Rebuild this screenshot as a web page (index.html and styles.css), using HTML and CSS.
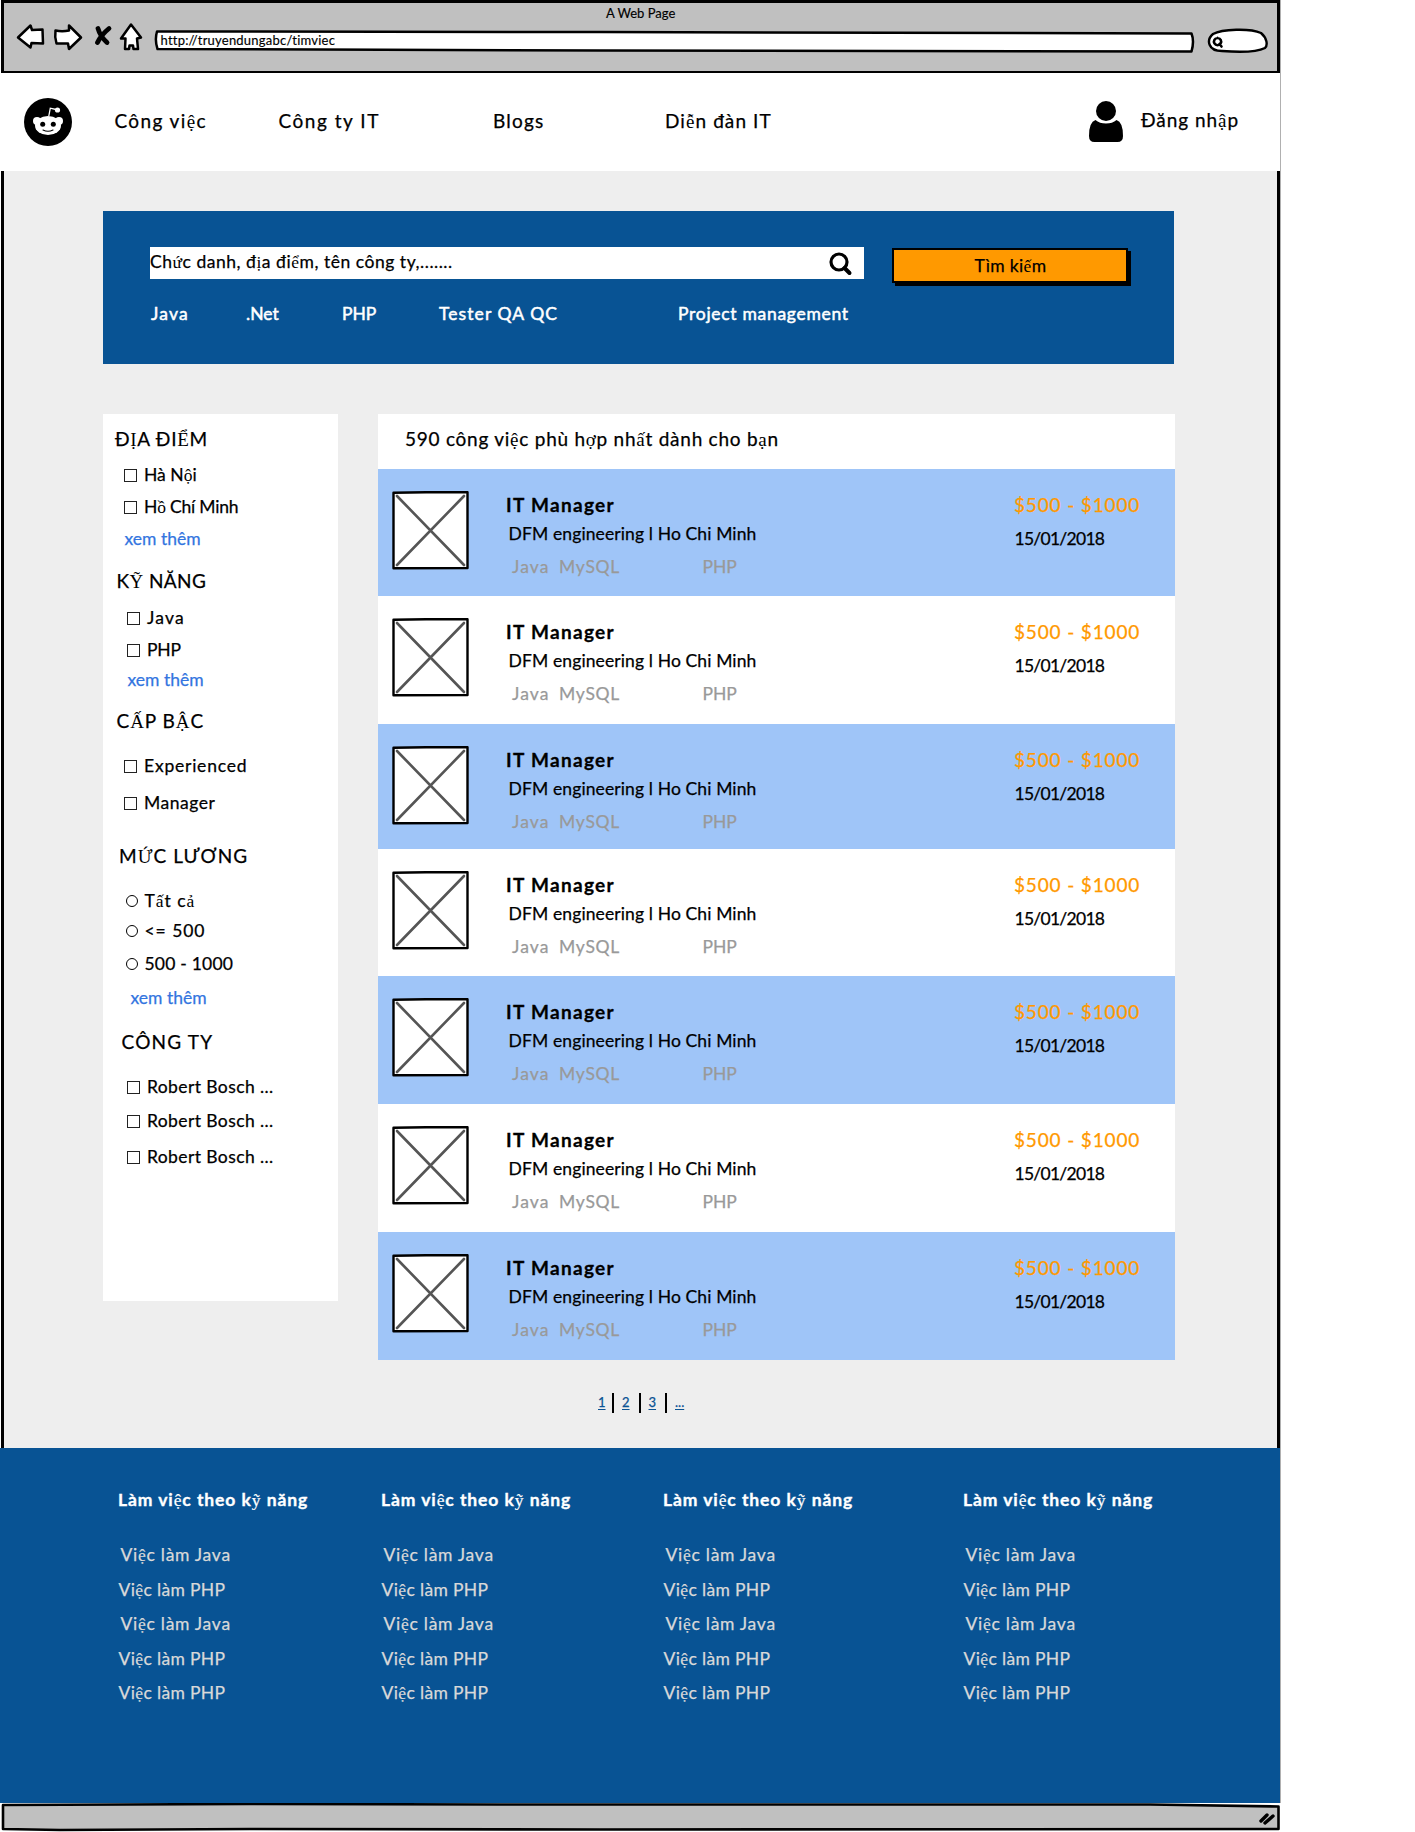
FILE: index.html
```html
<!DOCTYPE html>
<html lang="vi">
<head>
<meta charset="utf-8">
<title>A Web Page</title>
<link rel="stylesheet" href="styles.css">
</head>
<body>
<svg class="defs" width="0" height="0">
  <symbol id="thumb" viewBox="0 0 77 79">
    <path d="M1.500 1.800 L34 1.200 L75.500 1.300 L75.500 77 L1.500 77.300 Z" fill="#fff" stroke="#000" stroke-width="2.400" stroke-linejoin="round"/>
    <path d="M5 5 L72 74 M72 5 L5 74" stroke="#555" stroke-width="2.600" stroke-linecap="round"/>
  </symbol>
</svg>
<div class="window">
  <header class="chrome">
    <div class="chrome-title k0">A Web Page</div>
    <div class="toolbar">
      <svg class="tools" width="130" height="30" viewBox="16 22 130 30">
        <g fill="#fff" stroke="#000" stroke-width="2.5" stroke-linejoin="round">
          <path d="M18 37.5 L30.5 25.5 L32 30 L42.5 29.5 L43 43.5 L31.5 43 L30.5 47.5 Z"/>
          <path d="M55.5 30.5 Q62 32 69 30.5 L69 25.5 L81 37.5 L69 49 L68 43.5 L56.5 43.5 Q54.5 37 55.5 30.5 Z"/>
          <path d="M131 24.500 L141 37.500 L137 38.500 L138 49 L133.500 49 L133 45.500 L129.500 45.500 L129 49 L125 49 L125.500 38.500 L121 38.500 Z"/>
        </g>
        <path d="M98 28.500 Q100 36 107 42.500 M109 28.500 Q101 35 97.500 42.500" fill="none" stroke="#000" stroke-width="4.800" stroke-linecap="round"/>
      </svg>
      <div class="address">
        <svg class="address-frame" width="1042" height="26" viewBox="153 28 1042 26">
          <path d="M157 31.500 L600 32 L1191.500 33.500 Q1194.500 41 1191.500 51.500 L600 50.500 L157.500 49 Q154.500 40 157 31.500 Z" fill="#fff" stroke="#000" stroke-width="2.500" stroke-linejoin="round"/>
        </svg>
        <span class="url k2">http://truyendungabc/timviec</span>
      </div>
      <svg class="finder" width="62" height="28" viewBox="1207 27 62 28">
        <path d="M1213 34 C1222 29 1250 28 1261 33 C1267 38 1268 45 1265 48 C1255 53 1235 52 1222 51 C1208 51 1206 40 1213 34 Z" fill="#fff" stroke="#000" stroke-width="2.400"/>
        <path d="M1217.500 38 a3.600 3.600 0 1 0 .1 0 M1219.500 44 L1221.500 46.500" fill="none" stroke="#000" stroke-width="2.600" stroke-linecap="round"/>
      </svg>
    </div>
  </header>

  <nav class="nav">
    <svg class="logo" width="48" height="48" viewBox="0 0 48 48">
      <circle cx="24" cy="24" r="24"/>
      <g fill="#fff">
        <circle cx="13" cy="23" r="4"/><circle cx="35" cy="23" r="4"/>
        <ellipse cx="24" cy="27.500" rx="13" ry="9.600"/>
        <circle cx="33.500" cy="12" r="2.600"/>
      </g>
      <path d="M24.800 18 L26.300 10.200 L32 11.500" fill="none" stroke="#fff" stroke-width="1.300"/>
      <circle cx="18.700" cy="26.300" r="2.500"/><circle cx="29.300" cy="26.300" r="2.500"/>
      <path d="M19 32 Q24 34.500 29 32" fill="none" stroke="#000" stroke-width="1.100" stroke-linecap="round"/>
    </svg>
    <a class="nav-1 k14">Công vi<i>ệ</i>c</a>
    <a class="nav-2 k15">Công ty IT</a>
    <a class="nav-3 k12">Blogs</a>
    <a class="nav-4 k11">Di<i>ễ</i>n đàn IT</a>
    <svg class="user" width="34" height="41" viewBox="0 0 34 41">
      <circle cx="17" cy="10" r="10"/>
      <path d="M6.500 19 Q10.500 22.500 17 22.500 Q23.500 22.500 27.500 19 Q34 21 34 35 Q34 41 28.500 41 H5.500 Q0 41 0 35 Q0 21 6.500 19 Z"/>
    </svg>
    <a class="login k9">Đăng nh<i>ậ</i>p</a>
  </nav>

  <main class="page">
    <section class="search">
      <div class="search-row">
        <div class="field">
          <span class="k5">Ch<i>ứ</i>c danh, đ<i>ị</i>a đi<i>ể</i>m, tên công ty,.......</span>
          <svg width="24" height="24" viewBox="0 0 24 24"><circle cx="10" cy="10" r="8" fill="none" stroke="#000" stroke-width="3.200"/><path d="M15.500 16 L20.500 21" stroke="#000" stroke-width="4" stroke-linecap="round"/></svg>
        </div>
        <button class="go">Tìm ki<i>ế</i>m</button>
      </div>
      <div class="tags">
        <a class="k12">Java</a><a class="k0">.Net</a><a class="k0">PHP</a><a class="k11">Tester QA QC</a><a class="k7">Project management</a>
      </div>
    </section>

    <div class="columns">
      <aside class="filters">
        <h3 class="r mt15 in11 k7">Đ<i>Ị</i>A ĐI<i>Ể</i>M</h3>
        <label class="r mt15 in21 k0"><b class="box"></b>Hà N<i>ộ</i>i</label>
        <label class="r mt12 in21 kn"><b class="box"></b>H<i>ồ</i> Chí Minh</label>
        <a class="r mt12 in21 k0">xem thêm</a>
        <h3 class="r mt23 in13 k4">K<i>Ỹ</i> NĂNG</h3>
        <label class="r mt16 in24 k12"><b class="box"></b>Java</label>
        <label class="r mt12 in24 kn"><b class="box"></b>PHP</label>
        <a class="r mt10 in24 k0">xem thêm</a>
        <h3 class="r mt22 in13 k9">C<i>Ấ</i>P B<i>Ậ</i>C</h3>
        <label class="r mt24 in21 k8"><b class="box"></b>Experienced</label>
        <label class="r mt17 in21 k5"><b class="box"></b>Manager</label>
        <h3 class="r mt34 in15 k11">M<i>Ứ</i>C LƯƠNG</h3>
        <label class="r mt24 in23 k9"><b class="dot"></b>T<i>ấ</i>t c<i>ả</i></label>
        <label class="r mt10 in23 k9"><b class="dot"></b>&lt;= 500</label>
        <label class="r mt13 in23 k2"><b class="dot"></b>500 - 1000</label>
        <a class="r mt14 in27 k0">xem thêm</a>
        <h3 class="r mt25 in18 k12">CÔNG TY</h3>
        <label class="r mt24 in24 k4"><b class="box"></b>Robert Bosch ...</label>
        <label class="r mt14 in24 k4"><b class="box"></b>Robert Bosch ...</label>
        <label class="r mt16 in24 k4"><b class="box"></b>Robert Bosch ...</label>
      </aside>

      <section class="results">
        <h2 class="k75">590 công vi<i>ệ</i>c phù h<i>ợ</i>p nh<i>ấ</i>t dành cho b<i>ạ</i>n</h2>
        <article class="job h127">
          <svg class="thumb"><use href="#thumb"/></svg>
          <div class="info"><h4>IT Manager</h4><p>DFM engineering l Ho Chi Minh</p><div class="skills"><span>Java</span><span>MySQL</span><span>PHP</span></div></div>
          <div class="meta"><strong>$500 - $1000</strong><time>15/01/2018</time></div>
        </article>
        <article class="job h128">
          <svg class="thumb"><use href="#thumb"/></svg>
          <div class="info"><h4>IT Manager</h4><p>DFM engineering l Ho Chi Minh</p><div class="skills"><span>Java</span><span>MySQL</span><span>PHP</span></div></div>
          <div class="meta"><strong>$500 - $1000</strong><time>15/01/2018</time></div>
        </article>
        <article class="job h125">
          <svg class="thumb"><use href="#thumb"/></svg>
          <div class="info"><h4>IT Manager</h4><p>DFM engineering l Ho Chi Minh</p><div class="skills"><span>Java</span><span>MySQL</span><span>PHP</span></div></div>
          <div class="meta"><strong>$500 - $1000</strong><time>15/01/2018</time></div>
        </article>
        <article class="job h127">
          <svg class="thumb"><use href="#thumb"/></svg>
          <div class="info"><h4>IT Manager</h4><p>DFM engineering l Ho Chi Minh</p><div class="skills"><span>Java</span><span>MySQL</span><span>PHP</span></div></div>
          <div class="meta"><strong>$500 - $1000</strong><time>15/01/2018</time></div>
        </article>
        <article class="job h128">
          <svg class="thumb"><use href="#thumb"/></svg>
          <div class="info"><h4>IT Manager</h4><p>DFM engineering l Ho Chi Minh</p><div class="skills"><span>Java</span><span>MySQL</span><span>PHP</span></div></div>
          <div class="meta"><strong>$500 - $1000</strong><time>15/01/2018</time></div>
        </article>
        <article class="job h128">
          <svg class="thumb"><use href="#thumb"/></svg>
          <div class="info"><h4>IT Manager</h4><p>DFM engineering l Ho Chi Minh</p><div class="skills"><span>Java</span><span>MySQL</span><span>PHP</span></div></div>
          <div class="meta"><strong>$500 - $1000</strong><time>15/01/2018</time></div>
        </article>
        <article class="job h128">
          <svg class="thumb"><use href="#thumb"/></svg>
          <div class="info"><h4>IT Manager</h4><p>DFM engineering l Ho Chi Minh</p><div class="skills"><span>Java</span><span>MySQL</span><span>PHP</span></div></div>
          <div class="meta"><strong>$500 - $1000</strong><time>15/01/2018</time></div>
        </article>
      </section>
    </div>

    <div class="pager"><a><u>1</u></a><a><u>2</u></a><a><u>3</u></a><a><u>...</u></a></div>
  </main>

  <footer class="footer">
    <ul>
      <li class="head">Làm vi<i>ệ</i>c theo k<i>ỹ</i> năng</li>
      <li class="java">Vi<i>ệ</i>c làm Java</li><li>Vi<i>ệ</i>c làm PHP</li><li class="java">Vi<i>ệ</i>c làm Java</li><li>Vi<i>ệ</i>c làm PHP</li><li>Vi<i>ệ</i>c làm PHP</li>
    </ul>
    <ul>
      <li class="head">Làm vi<i>ệ</i>c theo k<i>ỹ</i> năng</li>
      <li class="java">Vi<i>ệ</i>c làm Java</li><li>Vi<i>ệ</i>c làm PHP</li><li class="java">Vi<i>ệ</i>c làm Java</li><li>Vi<i>ệ</i>c làm PHP</li><li>Vi<i>ệ</i>c làm PHP</li>
    </ul>
    <ul>
      <li class="head">Làm vi<i>ệ</i>c theo k<i>ỹ</i> năng</li>
      <li class="java">Vi<i>ệ</i>c làm Java</li><li>Vi<i>ệ</i>c làm PHP</li><li class="java">Vi<i>ệ</i>c làm Java</li><li>Vi<i>ệ</i>c làm PHP</li><li>Vi<i>ệ</i>c làm PHP</li>
    </ul>
    <ul>
      <li class="head">Làm vi<i>ệ</i>c theo k<i>ỹ</i> năng</li>
      <li class="java">Vi<i>ệ</i>c làm Java</li><li>Vi<i>ệ</i>c làm PHP</li><li class="java">Vi<i>ệ</i>c làm Java</li><li>Vi<i>ệ</i>c làm PHP</li><li>Vi<i>ệ</i>c làm PHP</li>
    </ul>
  </footer>

  <div class="statusbar">
    <svg width="1281" height="29" viewBox="0 0 1281 29">
      <rect x="0" y="0" width="1281" height="29" fill="#fff"/>
      <path d="M3 2 L250 1 L500 1.500 L1150 1.500 L1278.500 3.500 L1278.500 26 L600 26.500 L250 26 L60 27 L3 26 Z" fill="#c0c0c0" stroke="#000" stroke-width="2.600" stroke-linejoin="round"/>
      <path d="M1261 18 L1267 12 M1265 20 L1273 13" stroke="#000" stroke-width="3.400" stroke-linecap="round"/>
    </svg>
  </div>
</div>
</body>
</html>
```
FILE: styles.css
```css
* { box-sizing: border-box; }
body {
  margin: 0;
  background: #fff;
  color: #000;
  font: 17.5px/22px Lato, "Liberation Sans", sans-serif;
  -webkit-text-stroke: 0.25px;
}
h2, h3, h4, p, ul { margin: 0; padding: 0; font-weight: 400; }
i { font-family: "Liberation Serif", serif; font-style: normal; font-weight: 400; -webkit-text-stroke: 0; }
svg { display: block; flex: none; }
.defs { position: absolute; }
.window { width: 1281px; height: 1832px; display: flex; flex-direction: column; border-right: 1px solid #b0b0b0; }

/* tracking steps, tenths of a pixel */
.kn { letter-spacing: -0.2px; }
.k0 { letter-spacing: 0; } .k2 { letter-spacing: 0.22px; }
.k4 { letter-spacing: 0.4px; } .k5 { letter-spacing: 0.53px; } .k7 { letter-spacing: 0.7px; }
.k75 { letter-spacing: 0.75px; } .k8 { letter-spacing: 0.78px; } .k9 { letter-spacing: 0.95px; }
.k11 { letter-spacing: 1.08px; } .k12 { letter-spacing: 1.2px; } .k14 { letter-spacing: 1.37px; } .k15 { letter-spacing: 1.52px; }

/* browser chrome */
.chrome { height: 73px; margin-left: 1px; border: 3px solid #000; border-bottom-width: 2px; background: #c0c0c0; font-size: 13px; line-height: 20px; -webkit-text-stroke: 0.15px; }
.chrome-title { padding-left: 602px; height: 19px; }
.toolbar { display: flex; align-items: flex-start; }
.tools { margin-left: 12px; }
.address { position: relative; width: 1042px; height: 26px; margin: 6px 0 0 7px; }
.address-frame { position: absolute; left: 0; top: 0; }
.url { position: absolute; left: 7.5px; top: 2px; }
.finder { margin: 5px 0 0 12px; }

/* site navigation */
.nav { height: 98px; background: #fff; display: flex; align-items: flex-start; font-size: 19px; line-height: 20px; white-space: nowrap; }
.nav a { margin-top: 38px; }
.logo { margin: 25px 0 0 24px; }
.nav-1 { margin-left: 42.5px; width: 164px; }
.nav-2 { width: 214.5px; }
.nav-3 { width: 172px; }
.nav-4 { width: 424px; }
.user { margin-top: 28px; }
.nav .login { margin: 37px 0 0 18px; }

.page { height: 1277px; background: #eee; border: 3px solid #000; border-width: 0 3px; margin-left: 1px; padding: 40px 0 0 99px; }

/* search panel */
.search { width: 1071px; height: 153px; background: #085394; padding: 36px 0 0 47px; }
.search-row { display: flex; gap: 28px; }
.field { width: 714px; height: 32px; background: #fff; display: flex; justify-content: space-between; padding: 5px 11.5px 0 0; line-height: 20px; }
.go { width: 236px; height: 35px; margin-top: 1px; padding: 0; background: #f90; border: 2px solid #000; box-shadow: 3px 3px 0 #000; color: #000; font: inherit; letter-spacing: 0.35px; text-indent: 1px; -webkit-text-stroke: 0.25px; }
.tags { display: flex; color: #fff; height: 20px; margin-top: 20px; padding-left: 1px; -webkit-text-stroke: 0.5px; }
.tags a:nth-child(1) { width: 95px; }
.tags a:nth-child(2) { width: 96px; }
.tags a:nth-child(3) { width: 97px; }
.tags a:nth-child(4) { width: 239px; }

.columns { display: flex; align-items: flex-start; gap: 40px; margin-top: 50px; }

/* filters */
.filters { width: 235px; height: 887px; background: #fff; display: flow-root; }
.r { display: flex; height: 20px; white-space: pre; }
.filters h3 { display: block; font-size: 19px; line-height: 20px; text-indent: 1px; }
.filters a { color: #3375e0; text-indent: .5px; }
.filters label { align-items: flex-start; }
.box { width: 13px; height: 13px; border: 1px solid #222; margin: 4.5px 7px 0 0; }
.dot { width: 12px; height: 12px; border: 1px solid #000; border-radius: 50%; margin: 4.5px 6.5px 0 0; }
.in11 { padding-left: 11px; } .in13 { padding-left: 12.5px; } .in15 { padding-left: 15px; } .in18 { padding-left: 17.5px; }
.in21 { padding-left: 21px; } .in23 { padding-left: 23px; } .in24 { padding-left: 24px; } .in27 { padding-left: 27px; }
.mt10 { margin-top: 10px; } .mt12 { margin-top: 12px; } .mt13 { margin-top: 13px; } .mt14 { margin-top: 14px; }
.mt15 { margin-top: 15px; } .mt16 { margin-top: 16px; } .mt17 { margin-top: 17px; } .mt22 { margin-top: 22px; }
.mt23 { margin-top: 23px; } .mt24 { margin-top: 24px; } .mt25 { margin-top: 25px; } .mt34 { margin-top: 34px; }

/* results */
.results { width: 797px; background: #fff; }
.results h2 { height: 55px; padding: 15px 0 0 27px; font-size: 19px; line-height: 20px; }
.job { display: flex; }
.job:nth-of-type(odd) { background: #9fc5f8; }
.h125 { height: 125px; } .h127 { height: 127px; } .h128 { height: 128px; }
.thumb { width: 77px; height: 79px; margin: 22px 0 0 14px; }
.info { width: 508px; margin-left: 37px; padding-top: 26px; white-space: nowrap; }
.info h4 { height: 20px; font-size: 19px; line-height: 20px; font-weight: 700; letter-spacing: 1.3px; -webkit-text-stroke: 0.3px; }
.info p { height: 20px; margin-top: 8px; padding-left: 2.5px; letter-spacing: 0.12px; }
.skills { display: flex; margin-top: 13px; padding-left: 6px; color: #999; letter-spacing: 0.7px; }
.skills span:nth-child(1) { width: 47px; letter-spacing: 1.1px; }
.skills span:nth-child(2) { width: 143.5px; }
.skills span:nth-child(3) { letter-spacing: 0; }
.meta { padding-top: 26px; white-space: nowrap; }
.meta strong { display: block; height: 20px; font-size: 19px; line-height: 20px; font-weight: 400; color: #f90; letter-spacing: 0.85px; }
.meta time { display: block; margin-top: 13px; padding-left: .5px; letter-spacing: -0.73px; }

.pager { display: flex; margin: 33px 0 0 487px; height: 20px; font-size: 13px; line-height: 18px; color: #0b5394; }
.pager a { width: 26.5px; padding-left: 8px; border-left: 2px solid #000; }
.pager u { text-underline-offset: 2px; }
.pager a:first-child { border-left: 0; width: 22px; }

/* footer */
.footer { height: 355px; width: 1280px; background: #085394; color: #d9d9d9; display: flex; padding: 41px 0 0 118px; white-space: nowrap; }
.footer ul { list-style: none; width: 263px; }
.footer ul:nth-child(2) { width: 282px; }
.footer ul:nth-child(3) { width: 300px; }
.footer ul:nth-child(4) { width: 200px; }
.footer li { height: 20px; margin-bottom: 14.5px; padding-left: .5px; letter-spacing: 0.35px; }
.footer .java { padding-left: 2.5px; letter-spacing: 0.72px; }
.footer .head { padding-left: 0; margin-bottom: 35px; color: #fff; font-weight: 700; letter-spacing: 0.92px; -webkit-text-stroke: 0.35px; }
.footer i { -webkit-text-stroke: 0.2px; }

.statusbar { height: 29px; width: 1281px; }
```
